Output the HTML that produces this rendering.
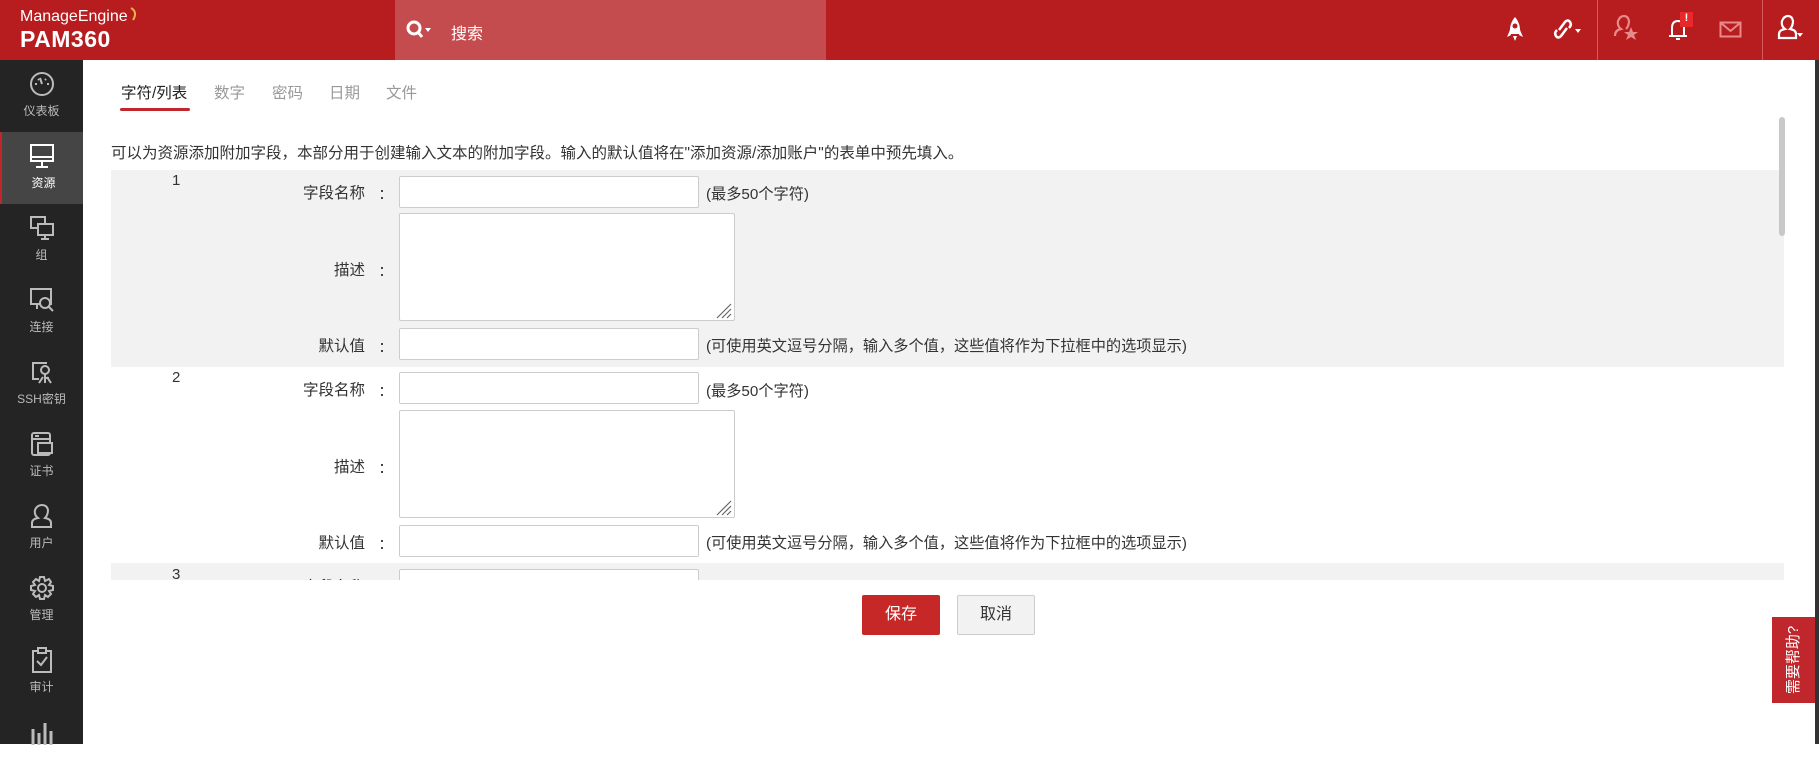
<!DOCTYPE html>
<html><head><meta charset="utf-8"><style>
*{margin:0;padding:0;box-sizing:border-box}
body{width:1819px;height:744px;overflow:hidden;position:relative;background:#fff;font-family:"Liberation Sans","Noto Sans CJK SC",sans-serif;color:#333}
.a{position:absolute}
#hdr{left:0;top:0;width:1819px;height:60px;background:#b71c1f}
#srch{left:395px;top:0;width:431px;height:60px;background:#c54c4e}
#side{left:0;top:60px;width:83px;height:684px;background:#242424}
.si{position:absolute;left:0;width:83px;height:72px;color:#bbb;font-size:12px;text-align:center}
.si svg{position:absolute;left:29px;top:11px}
.si span{position:absolute;left:0;width:83px;top:42px}
.lbl{position:absolute;left:225px;width:140px;text-align:right;font-size:15.5px;color:#333}
.col{position:absolute;left:381px;width:2px;height:9px;border-top:2px solid #444;border-bottom:2px solid #444;margin-top:4px}
.inp{position:absolute;left:399px;width:300px;height:32px;background:#fff;border:1px solid #ccc;border-radius:2px}
.ta{position:absolute;left:399px;width:336px;height:108px;background:#fff;border:1px solid #ccc;border-radius:2px}
.hint{position:absolute;left:706px;font-size:15.2px;color:#333}
.num{position:absolute;left:172px;font-size:15px;color:#333}
.tab{position:absolute;top:81px;font-size:15.5px;color:#999}
</style></head><body>
<div id="hdr" class="a"></div>
<div class="a" style="left:20px;top:8px;color:#fff;font-size:16px;">ManageEngine</div>
<svg class="a" style="left:128px;top:7px" width="12" height="14"><path d="M3 1 Q10 5 5 13" stroke="#e8b44a" stroke-width="2" fill="none"/></svg>
<div class="a" style="left:20px;top:26px;color:#fff;font-size:23px;font-weight:bold;letter-spacing:0.5px">PAM360</div>
<div id="srch" class="a"></div>
<svg class="a" style="left:406px;top:20px" width="26" height="20"><circle cx="8" cy="8" r="6" stroke="#fff" stroke-width="3" fill="none"/><path d="M12 12 L16 17" stroke="#fff" stroke-width="3"/><path d="M19 8 L25 8 L22 12Z" fill="#fff"/></svg>
<div class="a" style="left:451px;top:20px;color:#fff;font-size:16px">搜索</div>
<svg class="a" style="left:1505px;top:16px" width="20" height="28"><path d="M10 1 Q16 8 15 18 L5 18 Q4 8 10 1Z" fill="#fff"/><circle cx="10" cy="10" r="2.5" fill="#b71c1f"/><path d="M5 14 L2 21 L6 19Z M15 14 L18 21 L14 19Z M8 20 L12 20 L10 25Z" fill="#fff"/></svg>
<svg class="a" style="left:1553px;top:16px" width="32" height="28"><path d="M6 14 L12 6 Q15 3 17 6 Q19 9 16 12 M14 12 L8 20 Q5 23 3 20 Q1 17 4 14" stroke="#fff" stroke-width="2.5" fill="none"/><path d="M22 13 L28 13 L25 17Z" fill="#fff"/></svg>
<div class="a" style="left:1597px;top:0;width:1px;height:60px;background:#d25a5c"></div>
<svg class="a" style="left:1612px;top:14px" width="30" height="30"><path d="M3 22 Q3 16 9 15 Q5 12 6 7 Q8 2 12 2 Q16 2 17 7 Q17 12 14 15" stroke="#e8898a" stroke-width="2.2" fill="none"/><path d="M19 13 L21 18 L26 18 L22 21 L24 26 L19 23 L14 26 L16 21 L12 18 L17 18Z" fill="#e8898a"/></svg>
<svg class="a" style="left:1666px;top:14px" width="30" height="30"><path d="M6 22 L6 14 Q6 7 12 7 Q18 7 18 14 L18 22 Z M3 22 L21 22 M10 25 L14 25" stroke="#fff" stroke-width="2" fill="none"/></svg>
<div class="a" style="left:1680px;top:12px;width:13px;height:15px;background:#e8282a;color:#fff;font-size:11px;font-weight:bold;text-align:center;line-height:12px">!</div>
<svg class="a" style="left:1719px;top:21px" width="24" height="18"><rect x="1.5" y="1.5" width="20" height="14" stroke="#e8898a" stroke-width="2" fill="none"/><path d="M2 2 L11.5 10 L21 2" stroke="#e8898a" stroke-width="2" fill="none"/></svg>
<div class="a" style="left:1762px;top:0;width:1px;height:60px;background:#d25a5c"></div>
<svg class="a" style="left:1776px;top:14px" width="30" height="30"><path d="M3 24 L3 20 Q3 16 9 15 Q5 12 6 7 Q8 2 12 2 Q16 2 17 7 Q17 12 14 15 Q20 16 20 20 L20 24 Z" stroke="#fff" stroke-width="2.2" fill="none"/><path d="M21 19 L27 19 L24 23Z" fill="#fff"/></svg>

<div id="side" class="a">
<div class="si" style="top:0"><svg width="26" height="26"><circle cx="13" cy="13" r="11" stroke="#bbb" stroke-width="2" fill="none"/><path d="M13 13 L11 7 M6 13 L8 13 M18 13 L20 13 M9 8 L10 9 M17 8 L16 9" stroke="#bbb" stroke-width="2"/></svg><span>仪表板</span></div>
<div class="si" style="top:72px;background:#454545;color:#fff;border-left:2px solid #c0272d"><svg width="26" height="26" style="left:27px"><rect x="2" y="2" width="22" height="16" stroke="#fff" stroke-width="2" fill="none"/><path d="M13 18 L13 23 M7 24 L19 24 M2 14 L24 14" stroke="#fff" stroke-width="2"/></svg><span>资源</span></div>
<div class="si" style="top:144px"><svg width="26" height="26"><rect x="2" y="2" width="14" height="11" stroke="#bbb" stroke-width="2" fill="none"/><rect x="9" y="9" width="15" height="11" stroke="#bbb" stroke-width="2" fill="#242424"/><path d="M16 20 L16 24 M12 24 L20 24" stroke="#bbb" stroke-width="2"/></svg><span>组</span></div>
<div class="si" style="top:216px"><svg width="26" height="26"><rect x="2" y="2" width="20" height="15" stroke="#bbb" stroke-width="2" fill="none"/><circle cx="16" cy="16" r="5" stroke="#bbb" stroke-width="2" fill="#242424"/><path d="M20 20 L24 24 M8 17 L8 22" stroke="#bbb" stroke-width="2"/></svg><span>连接</span></div>
<div class="si" style="top:288px"><svg width="26" height="26"><path d="M18 4 L4 4 L4 20 L10 20" stroke="#bbb" stroke-width="2" fill="none"/><circle cx="16" cy="11" r="4" stroke="#bbb" stroke-width="2" fill="none"/><path d="M16 15 L16 24 M16 19 L20 19 M14 18 L10 24 M18 18 L22 24" stroke="#bbb" stroke-width="2"/></svg><span>SSH密钥</span></div>
<div class="si" style="top:360px"><svg width="26" height="26"><rect x="3" y="2" width="18" height="22" rx="2" stroke="#bbb" stroke-width="2" fill="none"/><path d="M3 8 L21 8 M6 5 L10 5" stroke="#bbb" stroke-width="2"/><rect x="9" y="12" width="14" height="10" stroke="#bbb" stroke-width="2" fill="#242424"/></svg><span>证书</span></div>
<div class="si" style="top:432px"><svg width="26" height="26"><path d="M3 24 L3 20 Q3 16 9 15 Q5 12 6 7 Q8 2 13 2 Q18 2 19 7 Q19 12 16 15 Q22 16 22 20 L22 24 Z" stroke="#bbb" stroke-width="2" fill="none"/></svg><span>用户</span></div>
<div class="si" style="top:504px"><svg width="26" height="26"><circle cx="13" cy="13" r="4" stroke="#bbb" stroke-width="2" fill="none"/><path d="M11 2 L15 2 L16 6 L20 4 L22 7 L20 10 L24 11 L24 15 L20 16 L22 19 L19 22 L16 20 L15 24 L11 24 L10 20 L7 22 L4 19 L6 16 L2 15 L2 11 L6 10 L4 7 L7 4 L10 6Z" stroke="#bbb" stroke-width="2" fill="none"/></svg><span>管理</span></div>
<div class="si" style="top:576px"><svg width="26" height="26"><rect x="4" y="4" width="18" height="21" stroke="#bbb" stroke-width="2" fill="none"/><rect x="9" y="1" width="8" height="5" stroke="#bbb" stroke-width="2" fill="#242424"/><path d="M8 14 L12 18 L18 10" stroke="#bbb" stroke-width="2" fill="none"/></svg><span>审计</span></div>
<div class="si" style="top:648px"><svg width="26" height="26"><path d="M4 10 L4 26 M10 14 L10 26 M16 4 L16 26 M22 12 L22 26" stroke="#bbb" stroke-width="3"/></svg></div>
</div>

<div class="tab" style="left:121px;color:#222">字符/列表</div>
<div class="a" style="left:120px;top:108px;width:70px;height:3px;background:#c0272d;border-radius:2px"></div>
<div class="tab" style="left:214px">数字</div>
<div class="tab" style="left:272px">密码</div>
<div class="tab" style="left:329px">日期</div>
<div class="tab" style="left:386px">文件</div>

<div class="a" style="left:111px;top:141px;font-size:15.5px;color:#333;white-space:nowrap">可以为资源添加附加字段，本部分用于创建输入文本的附加字段。输入的默认值将在"添加资源/添加账户"的表单中预先填入。</div>

<div class="a" style="left:111px;top:170px;width:1673px;height:410px;overflow:hidden">
 <div class="a" style="left:0;top:0;width:1673px;height:197px;background:#f2f2f2"></div>
 <div class="a" style="left:0;top:393px;width:1673px;height:100px;background:#f2f2f2"></div>
</div>
<div class="a" style="left:0;top:170px;width:1784px;height:410px;overflow:hidden">
 <div class="num" style="top:2px">1</div>
 <div class="lbl" style="top:11px">字段名称</div><div class="col" style="top:16px"></div>
 <div class="inp" style="top:6px"></div>
 <div class="hint" style="top:12px">(最多50个字符)</div>
 <div class="lbl" style="top:88px">描述</div><div class="col" style="top:93px"></div>
 <div class="ta" style="top:43px"></div>
 <div class="lbl" style="top:164px">默认值</div><div class="col" style="top:169px"></div>
 <div class="inp" style="top:158px"></div>
 <div class="hint" style="top:164px">(可使用英文逗号分隔，输入多个值，这些值将作为下拉框中的选项显示)</div>
 <div class="num" style="top:199px">2</div>
 <div class="lbl" style="top:208px">字段名称</div><div class="col" style="top:213px"></div>
 <div class="inp" style="top:202px"></div>
 <div class="hint" style="top:209px">(最多50个字符)</div>
 <div class="lbl" style="top:285px">描述</div><div class="col" style="top:290px"></div>
 <div class="ta" style="top:240px"></div>
 <div class="lbl" style="top:361px">默认值</div><div class="col" style="top:366px"></div>
 <div class="inp" style="top:355px"></div>
 <div class="hint" style="top:361px">(可使用英文逗号分隔，输入多个值，这些值将作为下拉框中的选项显示)</div>
 <div class="num" style="top:396px">3</div>
 <div class="lbl" style="top:405px">字段名称</div><div class="col" style="top:410px"></div>
 <div class="inp" style="top:399px"></div>
 <div class="hint" style="top:406px">(最多50个字符)</div>
</div>
<svg class="a" style="left:712px;top:299px" width="20" height="20"><path d="M19 5 L5 19 M19 10 L10 19 M19 15 L15 19" stroke="#666" stroke-width="1.2"/></svg>
<svg class="a" style="left:712px;top:496px" width="20" height="20"><path d="M19 5 L5 19 M19 10 L10 19 M19 15 L15 19" stroke="#666" stroke-width="1.2"/></svg>

<div class="a" style="left:1779px;top:117px;width:6px;height:119px;background:#c8c8c8;border-radius:3px"></div>

<div class="a" style="left:862px;top:595px;width:78px;height:40px;background:#c62828;border-radius:2px;color:#fff;font-size:16px;text-align:center;line-height:40px">保存</div>
<div class="a" style="left:957px;top:595px;width:78px;height:40px;background:#f2f2f2;border:1px solid #ccc;border-radius:2px;color:#333;font-size:16px;text-align:center;line-height:38px">取消</div>

<div class="a" style="left:1772px;top:617px;width:43px;height:86px;background:#c0272d"></div>
<div class="a" style="left:1751px;top:648px;width:86px;height:24px;color:#fff;font-size:15px;text-align:center;line-height:24px;transform:rotate(-90deg)">需要帮助?</div>
<div class="a" style="left:1815px;top:60px;width:4px;height:684px;background:#333"></div>
</body></html>
